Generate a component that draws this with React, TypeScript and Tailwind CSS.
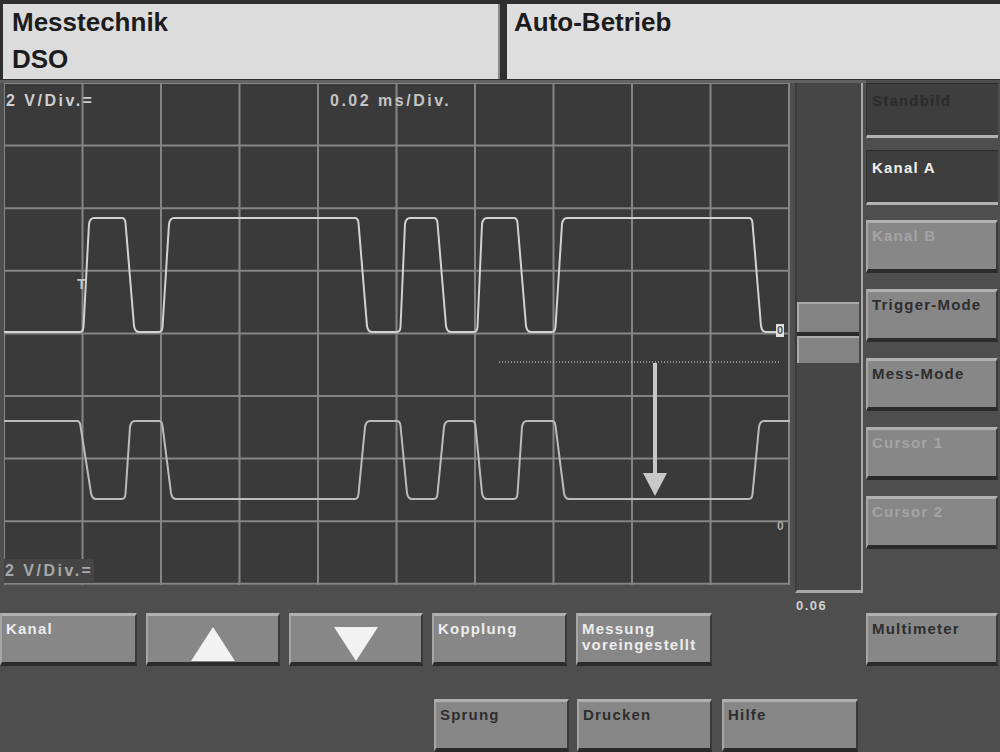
import React from "react";

type Edge = [number, number];

// builds a square-ish wave with soft corners; coordinates are page pixels
const wave = (hi: number, lo: number, startHigh: boolean, edges: Edge[], x0: number, x1: number) => {
  let y = startHigh ? hi : lo;
  let d = `M ${x0} ${y}`;
  for (const [a, b] of edges) {
    const ny = y === hi ? lo : hi;
    const dir = ny > y ? 1 : -1;
    d += ` L ${a - 3} ${y} Q ${a} ${y} ${a + 0.5} ${y + dir * 5} L ${b - 1} ${ny - dir * 6} Q ${b} ${ny} ${b + 4} ${ny}`;
    y = ny;
  }
  return d + ` L ${x1} ${y}`;
};

const topEdges: Edge[] = [
  [83, 90], [125, 135], [162, 170], [358, 368], [400, 406],
  [437, 447], [477, 483], [517, 527], [555, 563], [752, 762],
];
const bottomEdges: Edge[] = [
  [80, 92], [125, 131], [162, 172], [358, 366], [400, 408],
  [437, 445], [475, 483], [517, 523], [555, 565], [752, 760],
];

const cols = Array.from({ length: 11 }, (_, i) => 4 + i * 78.5);
const rows = Array.from({ length: 9 }, (_, i) => 84 + i * 62.6);

const Screen = () => (
  <div className="relative w-[786px] h-[502px] bg-[#3a3a3a]">
    <svg width="786" height="502" viewBox="4 84 786 502" className="block">
      {cols.map((x) => (
        <line key={"c" + x} x1={x} y1={84} x2={x} y2={586} stroke="#858585" strokeWidth="2" />
      ))}
      {rows.map((y) => (
        <line key={"r" + y} x1={4} y1={y} x2={790} y2={y} stroke="#858585" strokeWidth="2" />
      ))}
      <path d={wave(219, 333, false, topEdges, 4, 778)} fill="none" stroke="#d2d2d2" strokeWidth="2" />
      <path d={wave(422, 500, true, bottomEdges, 4, 790)} fill="none" stroke="#bbbbbb" strokeWidth="2" />
      <line x1={499} y1={363} x2={780} y2={363} stroke="#e0e0e0" strokeWidth="1.2" strokeDasharray="1 2" />
      <line x1={655} y1={364} x2={655} y2={478} stroke="#c8c8c8" strokeWidth="4" />
      <polygon points="643,474 667,474 655,497" fill="#c8c8c8" />
    </svg>
    <div className="absolute left-[2px] top-[6px] text-[16px] font-bold tracking-[2.5px] text-[#cfcfcf]">2 V/Div.=</div>
    <div className="absolute left-[326px] top-[6px] text-[16px] font-bold tracking-[2.5px] text-[#c4c4c4]">0.02 ms/Div.</div>
    <div className="absolute left-[0px] top-[476px] px-[1px] bg-[#454545] text-[16px] font-bold tracking-[2.5px] text-[#a8a8a8]">2 V/Div.=</div>
    <div className="absolute left-[73px] top-[190px] text-[15px] font-bold text-[#c4c4c4]">T</div>
    <div className="absolute left-[772px] top-[241px] px-[1px] bg-[#e0e0e0] text-[11px] leading-[13px] font-bold text-[#555]">0</div>
    <div className="absolute left-[773px] top-[434px] text-[12px] font-bold text-[#a8a8a8]">0</div>
  </div>
);

type BtnProps = {
  label?: React.ReactNode;
  w: string;
  h?: string;
  tone?: "light" | "dark" | "faded";
  children?: React.ReactNode;
};

const Btn = ({ label, w, h = "h-[53px]", tone = "light", children }: BtnProps) => {
  const text =
    tone === "light" ? "text-[#ececec]" : tone === "dark" ? "text-[#2e2e2e]" : "text-[#a4a4a4]";
  return (
    <div
      className={`${w} ${h} shrink-0 bg-[#878787] border-t-[3px] border-l-[2px] border-b-[4px] border-r-[2px] border-t-[#b0b0b0] border-l-[#a6a6a6] border-b-[#2b2b2b] border-r-[#393939] pl-[4px] pt-[5px] text-[15px] leading-[16px] font-bold tracking-[1.2px] ${text}`}
    >
      {children ?? label}
    </div>
  );
};

const DarkBtn = ({ label, text }: { label: string; text: string }) => (
  <div className="w-[132px] h-[55px] bg-[#3e3e3e] border-t-[1px] border-t-[#2c2c2c] border-b-[3px] border-b-[#b2b2b2] border-l-[1px] border-l-[#333] pl-[5px] pt-[9px]">
    <div className={`text-[15px] leading-[16px] font-bold tracking-[1.2px] ${text}`}>{label}</div>
  </div>
);

export default function App() {
  return (
    <div className="w-[1000px] h-[752px] overflow-hidden bg-[#4e4e4e] font-['Liberation_Sans',Arial,sans-serif] flex flex-col">
      <div className="h-[80px] bg-[#2f2f2f] pt-[4px] pl-[3px] flex shrink-0">
        <div className="w-[497px] h-[75px] bg-[#dcdcdc] border-r-[2px] border-[#8a8a8a] pl-[9px] text-[26px] leading-[37px] font-bold text-[#1c1c1c]">
          <div>Messtechnik</div>
          <div>DSO</div>
        </div>
        <div className="ml-[7px] flex-1 h-[75px] bg-[#dedede] pl-[7px] text-[26px] leading-[37px] font-bold text-[#1c1c1c]">
          Auto-Betrieb
        </div>
      </div>

      <div className="flex flex-1">
        <div className="w-[866px] flex flex-col">
          <div className="h-[533px] flex pt-[3px] pl-[4px] bg-[linear-gradient(#626262,#626262)] bg-no-repeat bg-[length:100%_3px]">
            <Screen />
            <div className="ml-[5px] w-[68px] flex flex-col">
              <div className="relative h-[512px] bg-[#464646] border-l-[2px] border-l-[#3c3c3c] border-r-[2px] border-r-[#a9a9a9] border-b-[3px] border-b-[#a9a9a9]">
                <div className="absolute left-[0px] top-[219px] w-[62px] h-[30px] bg-[#838383] border-t-[2px] border-l-[2px] border-[#ababab]" />
                <div className="absolute left-[0px] top-[249px] w-[62px] h-[4px] bg-[#2a2a2a]" />
                <div className="absolute left-[0px] top-[253px] w-[62px] h-[27px] bg-[#838383] border-t-[2px] border-l-[2px] border-[#ababab]" />
              </div>
              <div className="mt-[6px] pl-[1px] text-[13px] leading-[14px] font-bold tracking-[1.5px] text-[#cfcfcf]">0.06</div>
            </div>
          </div>

          <div className="flex gap-[9px]">
            <Btn w="w-[137px]" label="Kanal" />
            <Btn w="w-[134px]">
              <div className="flex justify-center pt-[6px] pr-[4px]">
                <svg width="44" height="34" viewBox="0 0 44 34">
                  <polygon points="22,0 44,34 0,34" fill="#f2f2f2" />
                </svg>
              </div>
            </Btn>
            <Btn w="w-[134px]">
              <div className="flex justify-center pt-[6px] pr-[4px]">
                <svg width="44" height="34" viewBox="0 0 44 34">
                  <polygon points="0,0 44,0 22,34" fill="#f2f2f2" />
                </svg>
              </div>
            </Btn>
            <Btn w="w-[135px]" label="Kopplung" />
            <Btn w="w-[136px]">
              <div>Messung</div>
              <div>voreingestellt</div>
            </Btn>
          </div>

          <div className="flex gap-[8px] ml-[434px] mt-[33px]">
            <Btn w="w-[135px]" tone="dark" label="Sprung" />
            <Btn w="w-[135px]" tone="dark" label="Drucken" />
            <div className="ml-[2px]">
              <Btn w="w-[136px]" tone="dark" label="Hilfe" />
            </div>
          </div>
        </div>

        <div className="w-[134px] flex flex-col pt-[3px]">
          <DarkBtn label="Standbild" text="text-[#2b2b2b]" />
          <div className="mt-[12px]">
            <DarkBtn label="Kanal A" text="text-[#f0f0f0]" />
          </div>
          <div className="mt-[15px] flex flex-col gap-[16px]">
            <Btn w="w-[132px]" tone="faded" label="Kanal B" />
            <Btn w="w-[132px]" tone="dark" label="Trigger-Mode" />
            <Btn w="w-[132px]" tone="dark" label="Mess-Mode" />
            <Btn w="w-[132px]" tone="faded" label="Cursor 1" />
            <Btn w="w-[132px]" tone="faded" label="Cursor 2" />
          </div>
          <div className="mt-[64px]">
            <Btn w="w-[132px]" tone="dark" label="Multimeter" />
          </div>
        </div>
      </div>
    </div>
  );
}
